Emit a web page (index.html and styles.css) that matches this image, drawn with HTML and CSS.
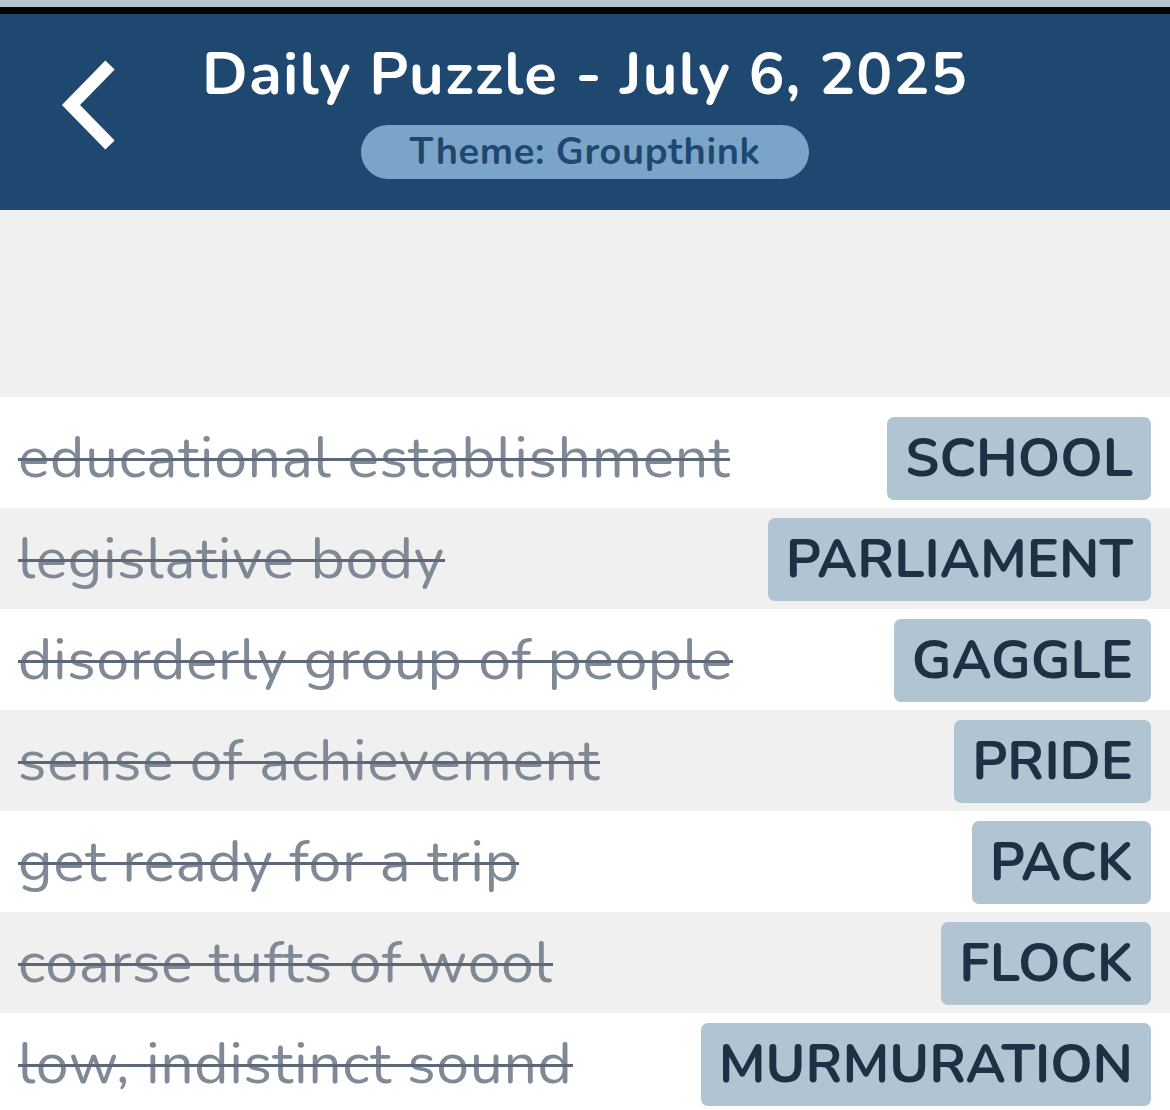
FILE: index.html
```html
<!DOCTYPE html>
<html lang="en">
  <head>
    <meta charset="UTF-8">
    <meta name="viewport" content="width=device-width, initial-scale=1.0">
    <title>Daily Puzzle</title>
    <link rel="stylesheet" href="styles.css">
  </head>
  <body>
    <div class="status-strip"></div>
    <header class="header">
      <a class="back" href="#" aria-label="Back">
        <svg width="70" height="110" viewBox="0 0 70 110">
          <path d="M54 15 L15 55 L54 95" fill="none" stroke="#fff" stroke-width="13" stroke-linecap="butt" stroke-linejoin="miter"/>
        </svg>
      </a>
      <div class="header-text">
        <h1>Daily Puzzle - July 6, 2025</h1>
        <div class="theme">Theme: Groupthink</div>
      </div>
    </header>

    <div class="spacer"></div>

    <ul class="answers">
      <li class="row">
        <span class="clue">educational establishment</span>
        <span class="word">SCHOOL</span>
      </li>
      <li class="row">
        <span class="clue">legislative body</span>
        <span class="word">PARLIAMENT</span>
      </li>
      <li class="row">
        <span class="clue">disorderly group of people</span>
        <span class="word">GAGGLE</span>
      </li>
      <li class="row">
        <span class="clue">sense of achievement</span>
        <span class="word">PRIDE</span>
      </li>
      <li class="row">
        <span class="clue">get ready for a trip</span>
        <span class="word">PACK</span>
      </li>
      <li class="row">
        <span class="clue">coarse tufts of wool</span>
        <span class="word">FLOCK</span>
      </li>
      <li class="row">
        <span class="clue">low, indistinct sound</span>
        <span class="word">MURMURATION</span>
      </li>
    </ul>
  </body>
</html>
```

FILE: styles.css
```css
body {
  font-family: "Nunito", "Lato", "Open Sans", sans-serif;
  background-color: #f0f0f0;
  margin: 0;
  padding: 0;
  overflow: hidden;
}

.status-strip {
  height: 7px;
  background-color: #b9c3cd;
  border-bottom: 7px solid #000;
}

.header {
  background-color: #1f4870;
  height: 196px;
  display: flex;
  align-items: flex-start;
  position: relative;
}

.back {
  position: absolute;
  left: 56px;
  top: 36px;
  display: block;
}

.header-text {
  flex: 1;
  display: flex;
  flex-direction: column;
  align-items: center;
  padding-top: 25px;
}

h1 {
  color: #fff;
  font-size: 60px;
  font-weight: 700;
  letter-spacing: 1.2px;
  margin: 0;
  line-height: 70px;
}

.theme {
  margin-top: 16px;
  background-color: #7aa5c8;
  color: #1f4870;
  font-size: 38px;
  font-weight: 700;
  letter-spacing: 0.6px;
  border-radius: 27px;
  height: 54px;
  line-height: 54px;
  padding: 0 48px;
}

.spacer {
  height: 187px;
}

.answers {
  list-style: none;
  margin: 0;
  padding: 10px 0 0;
  background-color: #fff;
}

.row {
  display: flex;
  align-items: center;
  justify-content: space-between;
  height: 101px;
  padding: 0 19px 0 18px;
  background-color: #fff;
}

.row:nth-child(even) {
  background-color: #f0f0f0;
}

.clue {
  position: relative;
  font-size: 59px;
  letter-spacing: 0.6px;
  color: #7f8a96;
}

/* strike line sits a little lower than the font's own line-through */
.clue::after {
  content: "";
  position: absolute;
  left: 0;
  right: 0;
  bottom: 37px;
  height: 3px;
  background-color: #5c6878;
}

.word {
  background-color: #b1c4d2;
  color: #1d3044;
  font-size: 54px;
  font-weight: 700;
  border-radius: 7px;
  height: 83px;
  line-height: 83px;
  padding: 0 18px;
  margin-top: 2px;
}
```
